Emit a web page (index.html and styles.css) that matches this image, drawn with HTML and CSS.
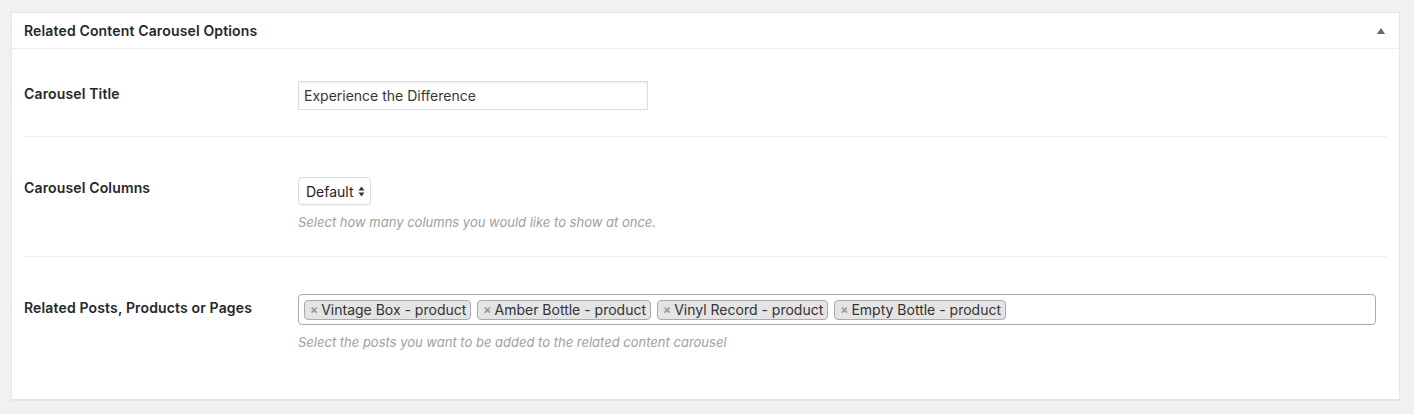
FILE: index.html
```html
<!DOCTYPE html>
<html lang="en">
<head>
  <meta charset="UTF-8">
  <title>Related Content Carousel Options</title>
  <link rel="stylesheet" href="styles.css">
</head>
<body>
  <div class="postbox">
    <div class="postbox-header">
      <h2>Related Content Carousel Options</h2>
      <span class="toggle-indicator"></span>
    </div>
    <div class="inside">
      <div class="field-row row-title">
        <div class="field-label">Carousel Title</div>
        <div class="field-control">
          <div class="text-input">Experience the Difference</div>
        </div>
      </div>
      <div class="field-row row-columns">
        <div class="field-label">Carousel Columns</div>
        <div class="field-control">
          <div class="select-box">
            <span>Default</span>
            <svg class="select-arrows" width="7" height="11" viewBox="0 0 7 11">
              <path d="M3.5 0.5 L6.5 4.5 L0.5 4.5 Z" fill="#333"/>
              <path d="M3.5 10.5 L6.5 6.5 L0.5 6.5 Z" fill="#333"/>
            </svg>
          </div>
          <p class="description">Select how many columns you would like to show at once.</p>
        </div>
      </div>
      <div class="field-row row-related">
        <div class="field-label">Related Posts, Products or Pages</div>
        <div class="field-control">
          <div class="tag-box">
            <span class="tag"><span class="tag-remove">×</span>Vintage Box - product</span>
            <span class="tag"><span class="tag-remove">×</span>Amber Bottle - product</span>
            <span class="tag"><span class="tag-remove">×</span>Vinyl Record - product</span>
            <span class="tag"><span class="tag-remove">×</span>Empty Bottle - product</span>
          </div>
          <p class="description">Select the posts you want to be added to the related content carousel</p>
        </div>
      </div>
    </div>
  </div>
</body>
</html>
```

FILE: styles.css
```css
body {
  font-family: Inter, "Liberation Sans", Arial, sans-serif;
  background-color: #f1f1f1;
  color: #23282d;
  margin: 0;
  padding: 12px 14px 14px 11px;
}
.postbox {
  background: #fff;
  border: 1px solid #e5e5e5;
  box-shadow: 0 1px 1px rgba(0,0,0,0.04);
  box-sizing: border-box;
  height: 388px;
}
.postbox-header {
  position: relative;
  height: 35px;
  border-bottom: 1px solid #eee;
  display: flex;
  align-items: center;
  padding: 0 12px;
}
.postbox-header h2 {
  margin: 0;
  font-size: 14px;
  font-weight: 600;
  letter-spacing: 0.15px;
  color: #23282d;
}
.toggle-indicator {
  position: absolute;
  right: 14px;
  top: 15px;
  width: 0;
  height: 0;
  border-left: 4px solid transparent;
  border-right: 4px solid transparent;
  border-bottom: 6px solid #666;
}
.inside {
  padding: 0 12px;
}
.field-row {
  display: grid;
  grid-template-columns: 274px 1fr;
  border-bottom: 1px solid #eee;
}
.field-row:last-child {
  border-bottom: none;
}
.field-label {
  font-size: 14px;
  font-weight: 600;
  letter-spacing: 0.15px;
  line-height: 20px;
  color: #23282d;
}
.row-title {
  padding: 32px 0 26px;
}
.row-title .field-label {
  padding-top: 3px;
}
.row-columns {
  padding: 40px 0 25px;
}
.row-columns .field-label {
  padding-top: 1px;
}
.row-related {
  padding: 37px 0 0;
}
.row-related .field-label {
  padding-top: 4px;
}
.text-input {
  width: 350px;
  height: 29px;
  box-sizing: border-box;
  border: 1px solid #ddd;
  box-shadow: inset 0 1px 2px rgba(0,0,0,0.07);
  padding: 0 5px;
  font-size: 14px;
  line-height: 27px;
  color: #32373c;
}
.select-box {
  display: inline-flex;
  align-items: center;
  gap: 4px;
  height: 28px;
  box-sizing: border-box;
  padding: 0 5px 0 7px;
  border: 1px solid #ddd;
  border-radius: 4px;
  font-size: 14px;
  color: #222;
  background: #fff;
  box-shadow: 0 1px 1px rgba(0,0,0,0.05);
}
.select-arrows {
  display: block;
}
.description {
  margin: 8px 0 0;
  font-size: 13px;
  line-height: 18px;
  font-style: italic;
  color: #a0a0a0;
}
.tag-box {
  display: flex;
  flex-wrap: wrap;
  gap: 6px;
  height: 31px;
  box-sizing: border-box;
  margin-right: 11px;
  padding: 5px;
  border: 1px solid #aaa;
  border-radius: 4px;
}
.tag {
  display: inline-flex;
  align-items: center;
  height: 20px;
  box-sizing: border-box;
  padding: 0 4px 1px 5px;
  background: #e4e4e4;
  border: 1px solid #aaa;
  border-radius: 4px;
  font-size: 14px;
  color: #333;
}
.tag-remove {
  color: #999;
  font-weight: bold;
  font-size: 12px;
  margin-right: 3px;
}
```
